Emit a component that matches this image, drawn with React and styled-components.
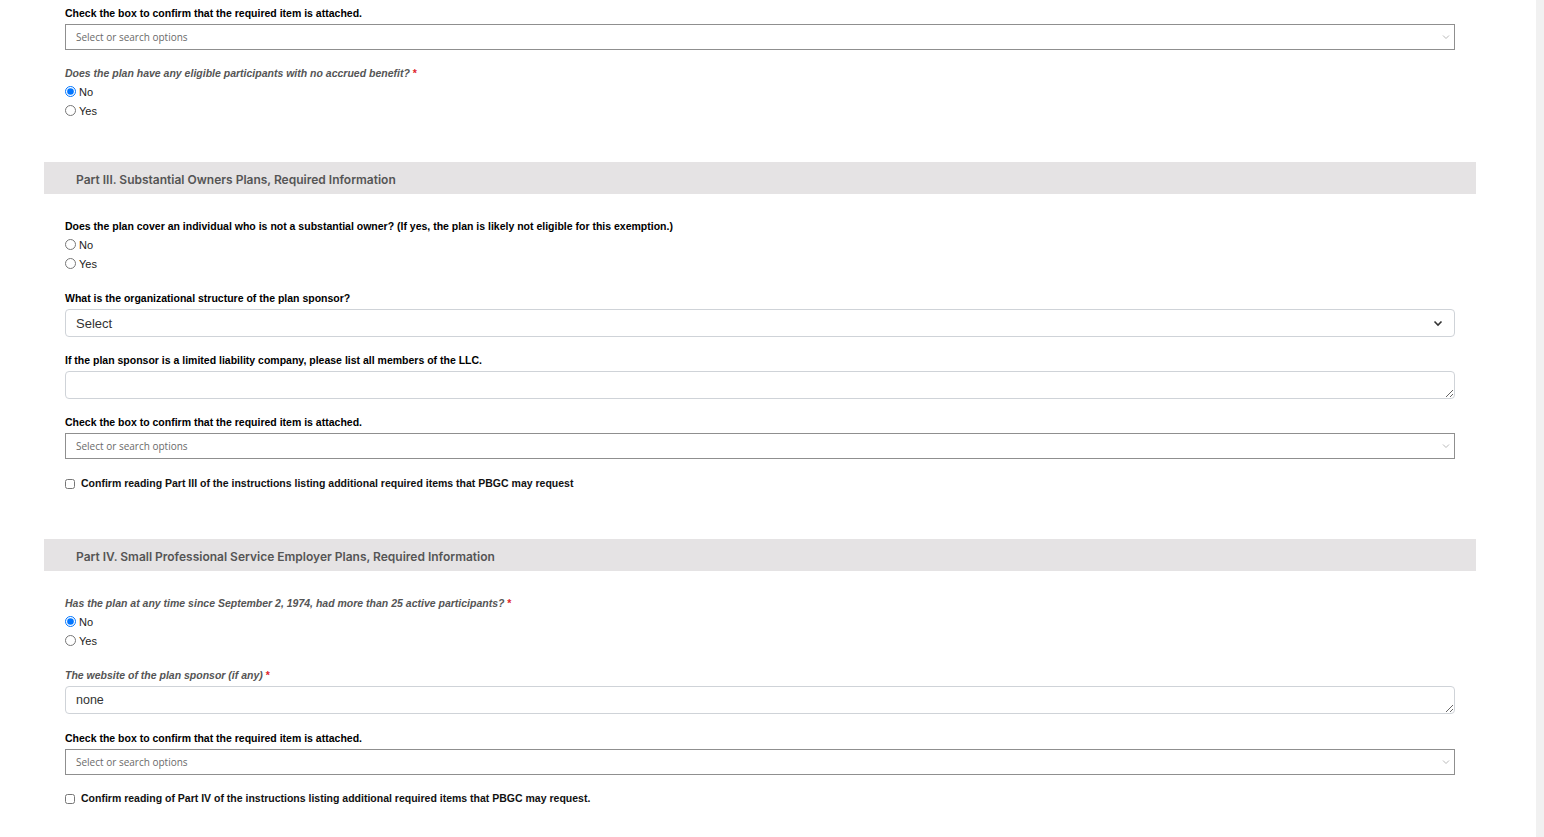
import styled, { createGlobalStyle } from "styled-components";

const GlobalStyle = createGlobalStyle`
  html, body {
    margin: 0;
    padding: 0;
    background: #fff;
    font-family: "Liberation Sans", Arial, sans-serif;
  }
`;

function Chevron({ light }) {
  return light ? (
    <svg width="8" height="6" viewBox="0 0 8 6">
      <path d="M1 1.5 L4 4.5 L7 1.5" fill="none" stroke="#b9b9b9" strokeWidth="1" />
    </svg>
  ) : (
    <svg width="10" height="7" viewBox="0 0 10 7">
      <path d="M1.5 1.5 L5 5 L8.5 1.5" fill="none" stroke="#333" strokeWidth="1.6" />
    </svg>
  );
}

function Label({ italic, required, children }) {
  return (
    <FieldLabel $italic={italic}>
      {children}
      {required && <Star> *</Star>}
    </FieldLabel>
  );
}

function MultiSelect() {
  return (
    <SearchBox>
      <span>Select or search options</span>
      <Chevron light />
    </SearchBox>
  );
}

function RadioGroup({ name, value }) {
  return (
    <Radios>
      {["No", "Yes"].map((opt) => (
        <RadioRow key={opt}>
          <input type="radio" name={name} defaultChecked={value === opt} />
          {opt}
        </RadioRow>
      ))}
    </Radios>
  );
}

function App() {
  return (
    <>
      <GlobalStyle />
      <Page>
        <Main>
          <Fields $top={6}>
            <Field>
              <Label>Check the box to confirm that the required item is attached.</Label>
              <MultiSelect />
            </Field>
            <Field>
              <Label italic required>
                Does the plan have any eligible participants with no accrued benefit?
              </Label>
              <RadioGroup name="q1" value="No" />
            </Field>
          </Fields>

          <SectionHeader $gap={42}>Part III. Substantial Owners Plans, Required Information</SectionHeader>
          <Fields $top={25}>
            <Field $after={18}>
              <Label>
                Does the plan cover an individual who is not a substantial owner? (If yes, the plan is likely
                not eligible for this exemption.)
              </Label>
              <RadioGroup name="q2" />
            </Field>
            <Field>
              <Label>What is the organizational structure of the plan sponsor?</Label>
              <SelectBox>
                <span>Select</span>
                <Chevron />
              </SelectBox>
            </Field>
            <Field>
              <Label>If the plan sponsor is a limited liability company, please list all members of the LLC.</Label>
              <TextArea />
            </Field>
            <Field $after={17}>
              <Label>Check the box to confirm that the required item is attached.</Label>
              <MultiSelect />
            </Field>
            <CheckRow>
              <input type="checkbox" />
              Confirm reading Part III of the instructions listing additional required items that PBGC may request
            </CheckRow>
          </Fields>

          <SectionHeader $gap={49}>Part IV. Small Professional Service Employer Plans, Required Information</SectionHeader>
          <Fields $top={25}>
            <Field $after={18}>
              <Label italic required>
                Has the plan at any time since September 2, 1974, had more than 25 active participants?
              </Label>
              <RadioGroup name="q3" value="No" />
            </Field>
            <Field $after={17}>
              <Label italic required>
                The website of the plan sponsor (if any)
              </Label>
              <TextArea defaultValue="none" />
            </Field>
            <Field>
              <Label>Check the box to confirm that the required item is attached.</Label>
              <MultiSelect />
            </Field>
            <CheckRow>
              <input type="checkbox" />
              Confirm reading of Part IV of the instructions listing additional required items that PBGC may request.
            </CheckRow>
          </Fields>
        </Main>
        <Gutter />
      </Page>
    </>
  );
}

const Page = styled.div`
  display: flex;
  min-height: 837px;
`;

const Main = styled.div`
  flex: 1;
  padding: 0 60px 60px 44px;
`;

const Gutter = styled.div`
  width: 8px;
  background: #f1f1f1;
`;

const Fields = styled.div`
  padding: ${(p) => p.$top}px 21px 0;
`;

const Field = styled.div`
  margin-bottom: ${(p) => p.$after ?? 16}px;
`;

const FieldLabel = styled.div`
  font-size: 10.5px;
  line-height: 14px;
  font-weight: bold;
  font-style: ${(p) => (p.$italic ? "italic" : "normal")};
  color: ${(p) => (p.$italic ? "#555" : "#000")};
  margin-bottom: 4px;
`;

const Star = styled.span`
  color: #e0242b;
  font-style: normal;
`;

const SearchBox = styled.div`
  box-sizing: border-box;
  height: 26px;
  border: 1px solid #8f8f8f;
  display: flex;
  align-items: center;
  justify-content: space-between;
  padding: 0 4px 0 10px;
  font-family: "Open Sans", "Noto Sans", sans-serif;
  font-size: 10px;
  color: #6a6a6a;
`;

const SelectBox = styled.div`
  box-sizing: border-box;
  height: 28px;
  margin-top: 1px;
  border: 1px solid #cfd3d8;
  border-radius: 4px;
  display: flex;
  align-items: center;
  justify-content: space-between;
  padding: 0 11px 0 10px;
  font-size: 13px;
  color: #333;
`;

const TextArea = styled.textarea`
  display: block;
  box-sizing: border-box;
  width: 100%;
  height: 28px;
  min-height: 28px;
  margin-top: 1px;
  border: 1px solid #cfd3d8;
  border-radius: 4px;
  padding: 6px 10px;
  font-family: "Liberation Sans", Arial, sans-serif;
  font-size: 12.5px;
  line-height: 14px;
  color: #333;
  resize: vertical;
  outline: none;
`;

const Radios = styled.div`
  display: flex;
  flex-direction: column;
  margin-top: -2px;
`;

const RadioRow = styled.label`
  display: flex;
  align-items: center;
  height: 19px;
  font-size: 11px;
  color: #222;

  input {
    width: 11px;
    height: 11px;
    margin: 0 3px 0 0;
  }
`;

const CheckRow = styled.label`
  display: flex;
  align-items: center;
  height: 14px;
  font-size: 10.5px;
  font-weight: bold;
  color: #111;

  input {
    width: 10px;
    height: 10px;
    margin: 2px 6px 0 0;
  }
`;

const SectionHeader = styled.div`
  margin-top: ${(p) => p.$gap}px;
  box-sizing: border-box;
  height: 32px;
  background: #e5e3e4;
  display: flex;
  align-items: center;
  padding: 3px 0 0 32px;
  font-family: Inter, "Liberation Sans", sans-serif;
  font-size: 12px;
  font-weight: 600;
  color: #555;
`;

export default App;
